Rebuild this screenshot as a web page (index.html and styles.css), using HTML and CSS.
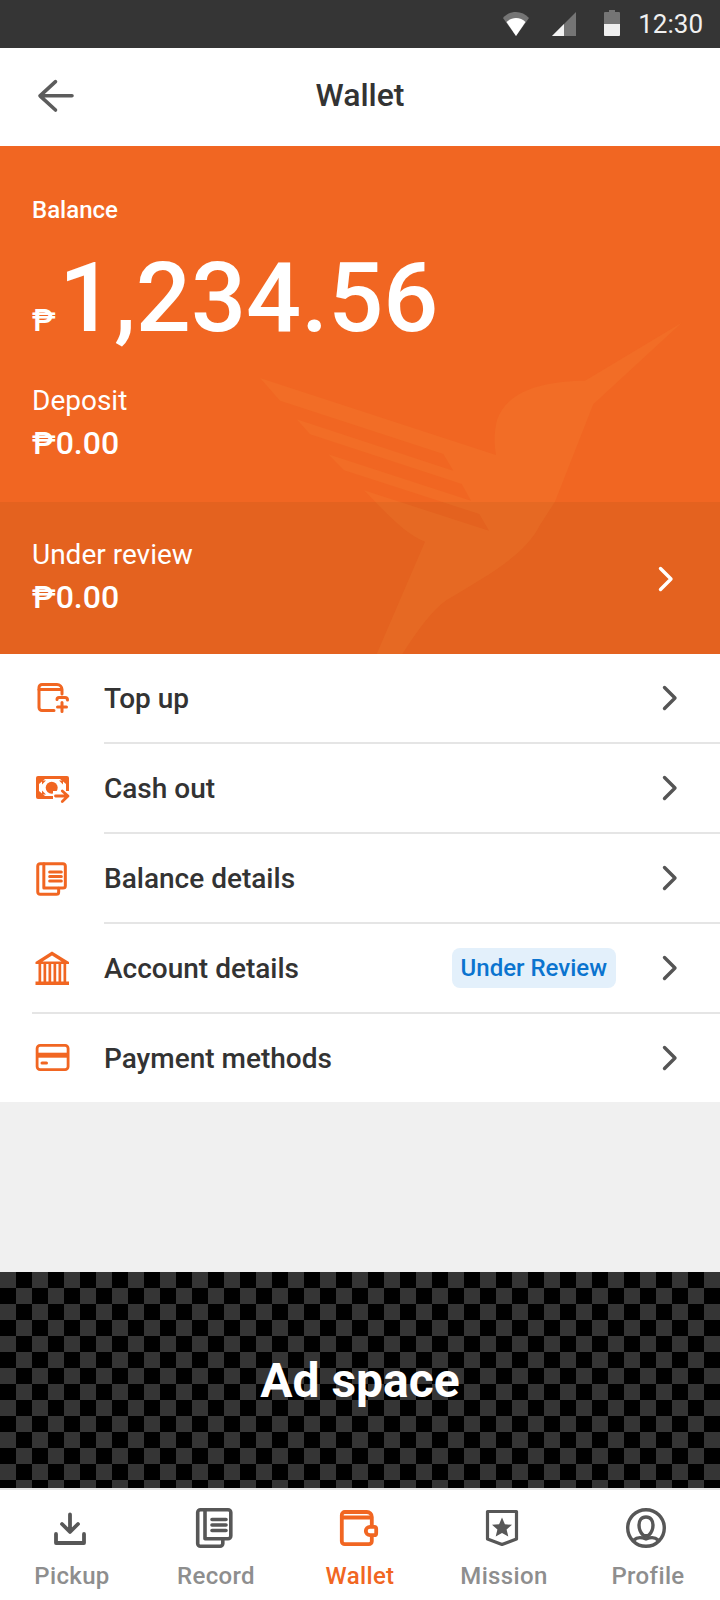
FILE: index.html
```html
<!DOCTYPE html>
<html lang="en">
<head>
  <meta charset="UTF-8" />
  <meta name="viewport" content="width=device-width, initial-scale=1.0" />
  <title>Wallet</title>
  <link rel="stylesheet" href="styles.css">
</head>
<body>
  <svg class="sprite" width="0" height="0">
    <symbol id="i-pages" viewBox="0 0 48 48">
      <g fill="none" stroke="currentColor" stroke-width="3.6" stroke-linejoin="round" stroke-linecap="round">
        <path d="M13 5.700H36a2.800 2.800 0 012.800 2.800V32a2.800 2.800 0 01-2.800 2.800H13z"/>
        <path d="M13 5.700H8.500A2.800 2.800 0 005.700 8.500V39.500a2.800 2.800 0 002.800 2.800H28a2.800 2.800 0 002.800-2.800V35"/>
        <path d="M20 15.500H34M20 21H34M20 26.500H34"/>
      </g>
    </symbol>
    <symbol id="i-chevron" viewBox="0 0 16 26">
      <path d="M2.500 2.500L13 13 2.500 23.500" fill="none" stroke="currentColor" stroke-width="3.400" stroke-linecap="round" stroke-linejoin="round"/>
    </symbol>
  </svg>

  <div class="status-bar">
    <svg class="st-wifi" width="26" height="24" viewBox="0 0 26 24">
      <path d="M0 6C3.500 2 8 0 13 0S22.500 2 26 6L13 24z" fill="#757575"/>
      <path d="M3.500 10C6 7.500 9.500 6 13 6S20 7.500 22.500 10L13 24z" fill="#fff"/>
    </svg>
    <svg class="st-signal" width="24" height="24" viewBox="0 0 24 24">
      <path d="M24 0V24H0z" fill="#757575"/>
      <path d="M12 12V24H0z" fill="#f2f2f2"/>
    </svg>
    <svg class="st-battery" width="16" height="26" viewBox="0 0 16 26">
      <path d="M5 0H11V2H15a1 1 0 011 1V14H0V3a1 1 0 011-1H5z" fill="#757575"/>
      <path d="M0 14H16V25a1 1 0 01-1 1H1a1 1 0 01-1-1z" fill="#efefef"/>
    </svg>
    <span class="st-time">12:30</span>
  </div>

  <header class="app-bar">
    <svg class="back" width="40" height="36" viewBox="0 0 40 36">
      <path d="M18.500 3.700L3 17.800 18.500 32M3 17.800H35" fill="none" stroke="#5c5c5c" stroke-width="3.600" stroke-linecap="round" stroke-linejoin="round"/>
    </svg>
    <h1>Wallet</h1>
  </header>

  <section class="hero">
    <div class="hero-top">
      <div class="balance-label">Balance</div>
      <div class="balance"><span class="peso">₱</span><span class="amount">1,234.56</span></div>
      <div class="line-label">Deposit</div>
      <div class="line-value">₱0.00</div>
    </div>
    <div class="hero-review">
      <div>
        <div class="line-label">Under review</div>
        <div class="line-value">₱0.00</div>
      </div>
      <svg class="chevron white"><use href="#i-chevron"/></svg>
    </div>
    <!-- bird watermark sits over both hero bands -->
    <svg class="bird" width="720" height="508" viewBox="0 146 720 508">
      <path d="M682 322.500L585 380.700C545 381 507 390 497 420C494 432 494 444 496 455L260 378L280 400.700L443.300 454L453.300 470.700L296.700 419.300L310 434.300L461.700 484L471 500.700L328.300 454.300L344 470.300L479.300 514L489 530.700L364 490.300C385 512 405 534 425 541.700L376.700 654H402.300C418 630 432 610 446.700 600C490 574 525 555 540 525L555 501.700L593.300 404.300z"/>
    </svg>
  </section>

  <nav class="menu">
    <a class="row">
      <svg class="row-icon" width="36" height="36" viewBox="0 0 36 36">
        <g fill="none" stroke="currentColor" stroke-width="3" stroke-linecap="round" stroke-linejoin="round">
          <path d="M19 29.500H7A3 3 0 014 26.500V6.500A3 3 0 017 3.500H22A5 5 0 0127 8.500V13"/>
          <path d="M4 8.500H26"/>
          <path d="M22 18.500A2 2 0 0124 16.500H30A2.500 2.500 0 0132.500 19"/>
          <path d="M27 21.500V30.500M22.500 26H31.500"/>
        </g>
      </svg>
      <span class="row-text">Top up</span>
      <svg class="chevron"><use href="#i-chevron"/></svg>
    </a>
    <a class="row">
      <svg class="row-icon" width="36" height="36" viewBox="0 0 36 36">
        <rect x="1" y="5" width="33" height="23" rx="2" fill="currentColor"/>
        <path d="M10 8H25L31 13V20L25 25H10L4 20V13z" fill="#fff"/>
        <path d="M7 13.500L11 9.500H7zM28 13.500L24 9.500H28zM7 19.500L11 23.500H7z" fill="currentColor"/>
        <circle cx="16.700" cy="16.700" r="6" fill="currentColor"/>
        <path d="M18 20H36V33H18z" fill="#fff"/>
        <path d="M20.500 25H32.500M27.300 20L33 25 27.300 30.500" fill="none" stroke="currentColor" stroke-width="2.800" stroke-linecap="round" stroke-linejoin="round"/>
      </svg>
      <span class="row-text">Cash out</span>
      <svg class="chevron"><use href="#i-chevron"/></svg>
    </a>
    <a class="row">
      <svg class="row-icon pages" width="40" height="40"><use href="#i-pages"/></svg>
      <span class="row-text">Balance details</span>
      <svg class="chevron"><use href="#i-chevron"/></svg>
    </a>
    <a class="row row-wide">
      <svg class="row-icon" width="36" height="36" viewBox="0 0 36 36">
        <path d="M17 .5L34 11V13H.5V11z" fill="currentColor"/>
        <path d="M17 4.500L26.500 10.500H7.500z" fill="#fff"/>
        <path d="M3.500 13H6.200V31H3.500zM8.500 13H11.200V31H8.500zM13.500 13H16.200V31H13.500zM18.500 13H21.200V31H18.500zM23.500 13H26.200V31H23.500zM28.500 13H31.200V31H28.500zM.5 30.500H34V34H.5z" fill="currentColor"/>
      </svg>
      <span class="row-text">Account details</span>
      <span class="chip">Under Review</span>
      <svg class="chevron"><use href="#i-chevron"/></svg>
    </a>
    <a class="row row-last">
      <svg class="row-icon" width="36" height="30" viewBox="0 0 36 30">
        <rect x="2.100" y="2.400" width="31" height="24.200" rx="3" fill="none" stroke="currentColor" stroke-width="2.800"/>
        <path d="M2 9.700H33V14.700H2z" fill="currentColor"/>
        <path d="M7 20H11.500" stroke="currentColor" stroke-width="3" stroke-linecap="round"/>
      </svg>
      <span class="row-text">Payment methods</span>
      <svg class="chevron"><use href="#i-chevron"/></svg>
    </a>
  </nav>

  <div class="spacer"></div>

  <div class="ad">Ad space</div>

  <footer class="tabs">
    <a class="tab">
      <svg class="tab-icon" viewBox="0 0 48 48">
        <path d="M22 10.500V27M14 20l8 8 8-8M8 30V39H36V30" fill="none" stroke="currentColor" stroke-width="3.800" stroke-linecap="round" stroke-linejoin="round"/>
      </svg>
      Pickup
    </a>
    <a class="tab">
      <svg class="tab-icon"><use href="#i-pages"/></svg>
      Record
    </a>
    <a class="tab active">
      <svg class="tab-icon" viewBox="0 0 48 48">
        <g fill="none" stroke="currentColor" stroke-width="3.800" stroke-linecap="round" stroke-linejoin="round">
          <path d="M35.800 21V13A5 5 0 0030.800 8H9A3 3 0 005.800 11V37.200A3 3 0 008.800 40.200H32.800A3 3 0 0035.800 37.200V33"/>
          <path d="M6 13.500H35"/>
          <path d="M34 22.800H38.200A2 2 0 0140.200 24.800V29.200A2 2 0 0138.200 31.200H34A4.200 4.200 0 0134 22.800z"/>
        </g>
      </svg>
      Wallet
    </a>
    <a class="tab">
      <svg class="tab-icon" viewBox="0 0 48 48">
        <path d="M7.500 7.500H36.500V35L22 40.500 7.500 35z" fill="none" stroke="currentColor" stroke-width="3.200" stroke-linejoin="round"/>
        <path d="M22 13.500l2.900 6.700 7.100.6-5.400 4.700 1.700 7.100L22 29l-6.300 3.600 1.700-7.100-5.400-4.700 7.100-.6z" fill="currentColor"/>
      </svg>
      Mission
    </a>
    <a class="tab">
      <svg class="tab-icon" viewBox="0 0 48 48">
        <g fill="none" stroke="currentColor" stroke-width="3.400">
          <circle cx="22" cy="24" r="18.300"/>
          <path d="M22 13C17 13 15 17 15 21C15 25 17 29 19 31C20 32 24 32 25 31C27 29 29 25 29 21C29 17 27 13 22 13z"/>
          <path d="M10 36C13 33 17 33 22 35C27 33 31 33 34 36"/>
        </g>
      </svg>
      Profile
    </a>
  </footer>
</body>
</html>
```

FILE: styles.css
```css
* {
  box-sizing: border-box;
}
html, body {
  margin: 0;
  padding: 0;
}
body {
  width: 720px;
  height: 1600px;
  display: flex;
  flex-direction: column;
  font-family: Roboto, "Liberation Sans", sans-serif;
  background: #f0f0f0;
  color: #333;
  overflow: hidden;
}
.sprite {
  position: absolute;
}

.status-bar {
  height: 48px;
  flex: none;
  background: #353535;
  display: flex;
  align-items: flex-end;
  padding: 0 17px 12px 0;
  justify-content: flex-end;
}
.st-wifi {
  margin-right: 23px;
}
.st-signal {
  margin-right: 28px;
}
.st-battery {
  margin-right: 18px;
}
.st-time {
  color: #f0f0f0;
  font-size: 26px;
  align-self: center;
  margin-bottom: -12px;
}

.app-bar {
  height: 98px;
  flex: none;
  background: #fff;
  position: relative;
  display: flex;
  align-items: center;
  justify-content: center;
  padding-bottom: 4px;
}
.app-bar h1 {
  margin: 0;
  font-size: 32px;
  font-weight: 500;
  color: #333;
}
.back {
  position: absolute;
  left: 37px;
  top: 30px;
}

.hero {
  height: 508px;
  flex: none;
  position: relative;
  background: #f16622;
  color: #fff;
  overflow: hidden;
}
.hero-top {
  height: 356px;
  padding: 50px 32px 0;
}
.hero-review {
  height: 152px;
  padding: 36px 46px 0 32px;
  background: #e4621f;
  display: flex;
  justify-content: space-between;
  align-items: flex-start;
}
.bird {
  position: absolute;
  left: 0;
  top: 0;
  fill: rgba(255, 190, 90, 0.08);
}
.balance-label {
  font-size: 24px;
  font-weight: 500;
  line-height: 28px;
}
.balance {
  display: flex;
  align-items: baseline;
  margin-top: 18px;
  height: 112px;
  line-height: 112px;
}
.peso {
  font-size: 32px;
  font-weight: 500;
  width: 27px;
}
.amount {
  font-size: 97px;
  font-weight: 500;
}
.line-label {
  font-size: 28px;
  line-height: 34px;
  margin-top: 0;
}
.hero-top .line-label {
  margin-top: 30px;
}
.line-value {
  font-size: 32px;
  font-weight: 500;
  line-height: 38px;
  margin-top: 6px;
}
.chevron {
  width: 16px;
  height: 26px;
  flex: none;
  color: #555;
}
.chevron.white {
  color: #fff;
  height: 28px;
  margin-top: 27px;
}

.menu {
  background: #fff;
  flex: none;
}
.row {
  height: 90px;
  display: flex;
  align-items: center;
  position: relative;
  padding: 0 42px 2px 104px;
}
.row::after {
  content: "";
  position: absolute;
  left: 104px;
  right: 0;
  bottom: 0;
  height: 2px;
  background: #e5e5e5;
}
.row-wide::after {
  left: 32px;
}
.row-last {
  height: 88px;
  padding-bottom: 0;
}
.row-last::after {
  display: none;
}
.row-icon {
  position: absolute;
  left: 35px;
  top: 50%;
  transform: translateY(-50%);
  color: #f16622;
}
.row-icon.pages {
  left: 33px;
}
.row-text {
  font-size: 28px;
  font-weight: 500;
  color: #333;
  flex: 1;
}
.chip {
  background: #e3f0fb;
  color: #0b74cf;
  font-size: 24px;
  font-weight: 500;
  height: 40px;
  line-height: 40px;
  padding: 0 9px;
  border-radius: 8px;
  margin-right: 46px;
}

.spacer {
  height: 170px;
  flex: none;
}

.ad {
  height: 216px;
  flex: none;
  display: flex;
  align-items: center;
  justify-content: center;
  color: #fff;
  font-size: 48px;
  font-weight: 700;
  background-color: #000;
  background-image: conic-gradient(#000 25%, #353535 0 50%, #000 0 75%, #353535 0);
  background-size: 32px 32px;
}

.tabs {
  height: 112px;
  flex: none;
  background: #fff;
  border-top: 2px solid #e5e5e5;
  display: grid;
  grid-template-columns: repeat(5, 144px);
}
.tab {
  display: flex;
  flex-direction: column;
  align-items: center;
  padding-top: 14px;
  font-size: 24px;
  font-weight: 500;
  letter-spacing: 0.35px;
  color: #8e8e8e;
  line-height: 28px;
}
.tab-icon {
  width: 48px;
  height: 48px;
  color: #575757;
  margin-bottom: 10px;
}
.tab.active {
  color: #f16622;
}
.tab.active .tab-icon {
  color: #f16622;
}
```
